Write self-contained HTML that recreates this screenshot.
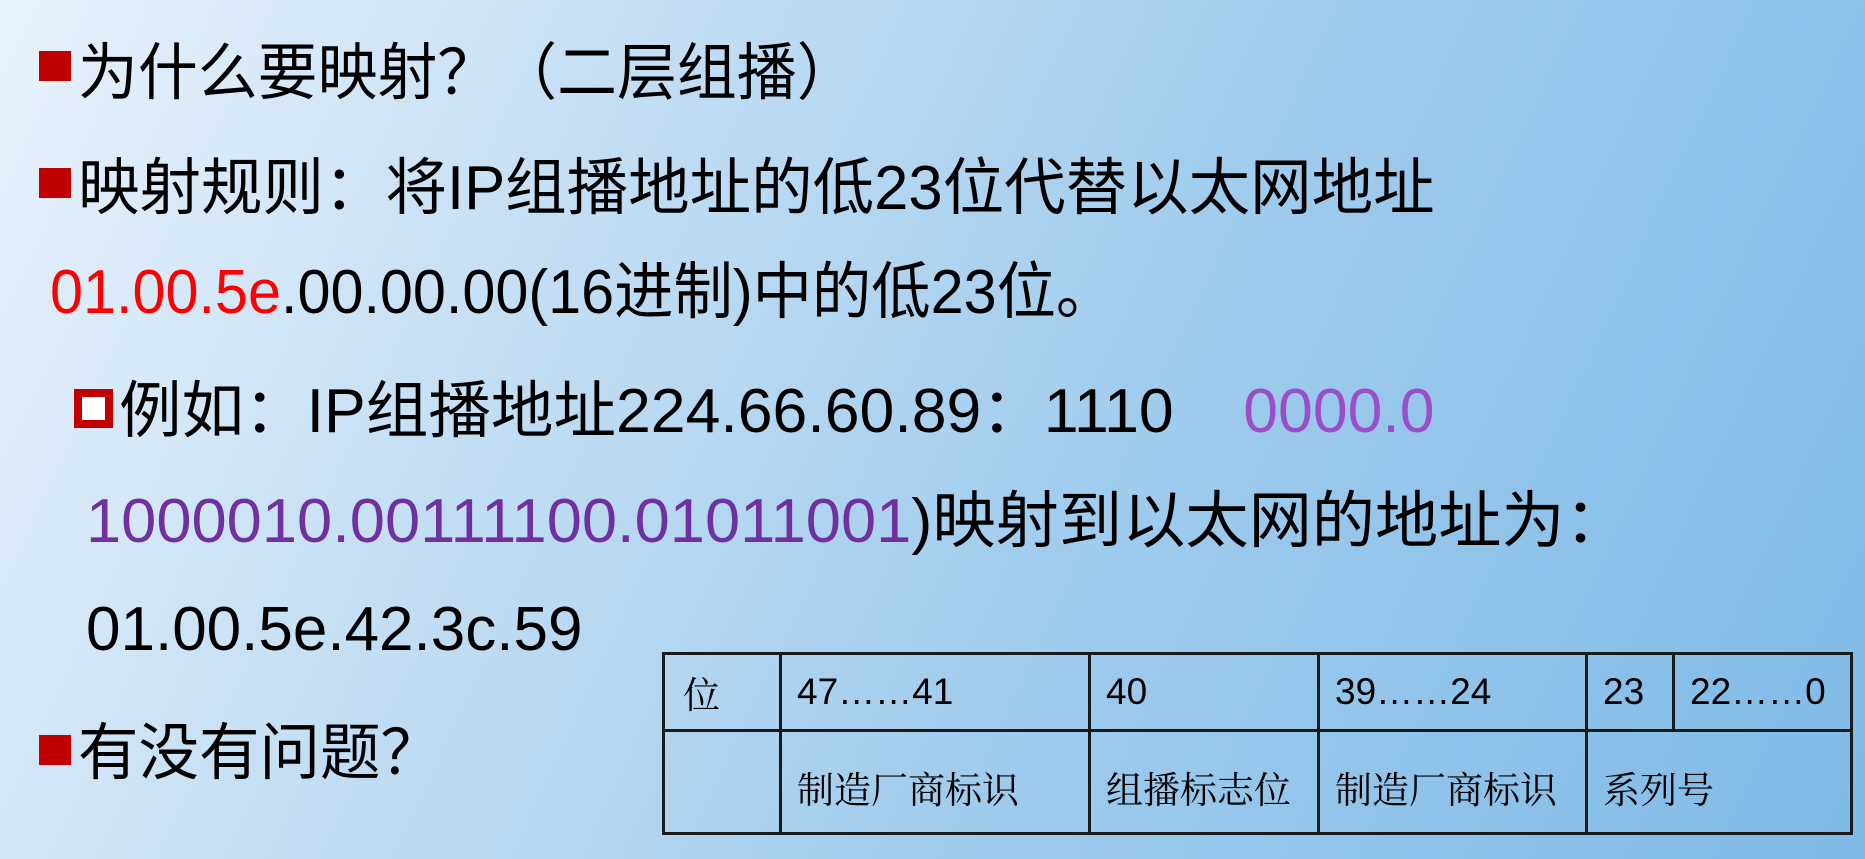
<!DOCTYPE html>
<html><head><meta charset="utf-8"><style>
html,body{margin:0;padding:0}
body{width:1865px;height:859px;overflow:hidden;position:relative;
background:linear-gradient(115deg,#e8f2fb 0%,#c3def4 30%,#9fcbed 60%,#7fbae6 100%);
font-family:"Liberation Sans","Noto Sans CJK SC",sans-serif;}
.t{position:absolute;white-space:nowrap;font-size:62px;line-height:70px;color:#000;transform-origin:0 50%;}
.b{position:absolute;background:#c00000;}
.h{position:absolute;border:8px solid #c00000;box-sizing:border-box;background:#fff;}
table{position:absolute;left:662px;top:652px;width:1188px;height:183px;border-collapse:collapse;table-layout:fixed;
font-family:"Liberation Sans","Noto Serif CJK SC",sans-serif;font-size:37px;}
td{border:3px solid #1a1a1a;padding:0 0 0 15px;vertical-align:middle;white-space:nowrap;overflow:hidden;}
</style></head><body>
<div class="b" style="left:39px;top:51px;width:32px;height:30px"></div>
<div class="t" style="left:78px;top:39px;transform:scaleX(0.966)">为什么要映射？（二层组播）</div>
<div class="b" style="left:39px;top:168px;width:32px;height:30px"></div>
<div class="t" style="left:78px;top:154px;transform:scaleX(0.992)">映射规则：将IP组播地址的低23位代替以太网地址</div>
<div class="t" style="left:50px;top:258px;transform:scaleX(0.957)"><span style="color:#ff0000">01.00.5e</span>.00.00.00(16进制)中的低23位。</div>
<div class="h" style="left:74px;top:389px;width:39px;height:39px"></div>
<div class="t" style="left:119px;top:377px;transform:scaleX(1.009)">例如：IP组播地址224.66.60.89：1110&nbsp;&nbsp;&nbsp;&nbsp;<span style="color:#9a4fc8">0000.0</span></div>
<div class="t" style="left:86px;top:487px;transform:scaleX(1.02)"><span style="color:#7030a0">1000010.00111100.01011001</span>)映射到以太网的地址为：</div>
<div class="t" style="left:86px;top:595px">01.00.5e.42.3c.59</div>
<div class="b" style="left:39px;top:735px;width:32px;height:30px"></div>
<div class="t" style="left:78px;top:719px;transform:scaleX(0.976)">有没有问题？</div>
<table>
<colgroup><col style="width:117px"><col style="width:309px"><col style="width:229px"><col style="width:268px"><col style="width:87px"><col style="width:178px"></colgroup>
<tr style="height:77px"><td style="padding-left:18px">位</td><td>47……41</td><td>40</td><td>39……24</td><td>23</td><td>22……0</td></tr>
<tr><td style="padding-top:10px"></td><td style="padding-top:10px">制造厂商标识</td><td style="padding-top:10px">组播标志位</td><td style="padding-top:10px">制造厂商标识</td><td colspan="2" style="padding-top:10px">系列号</td></tr>
</table>
</body></html>
